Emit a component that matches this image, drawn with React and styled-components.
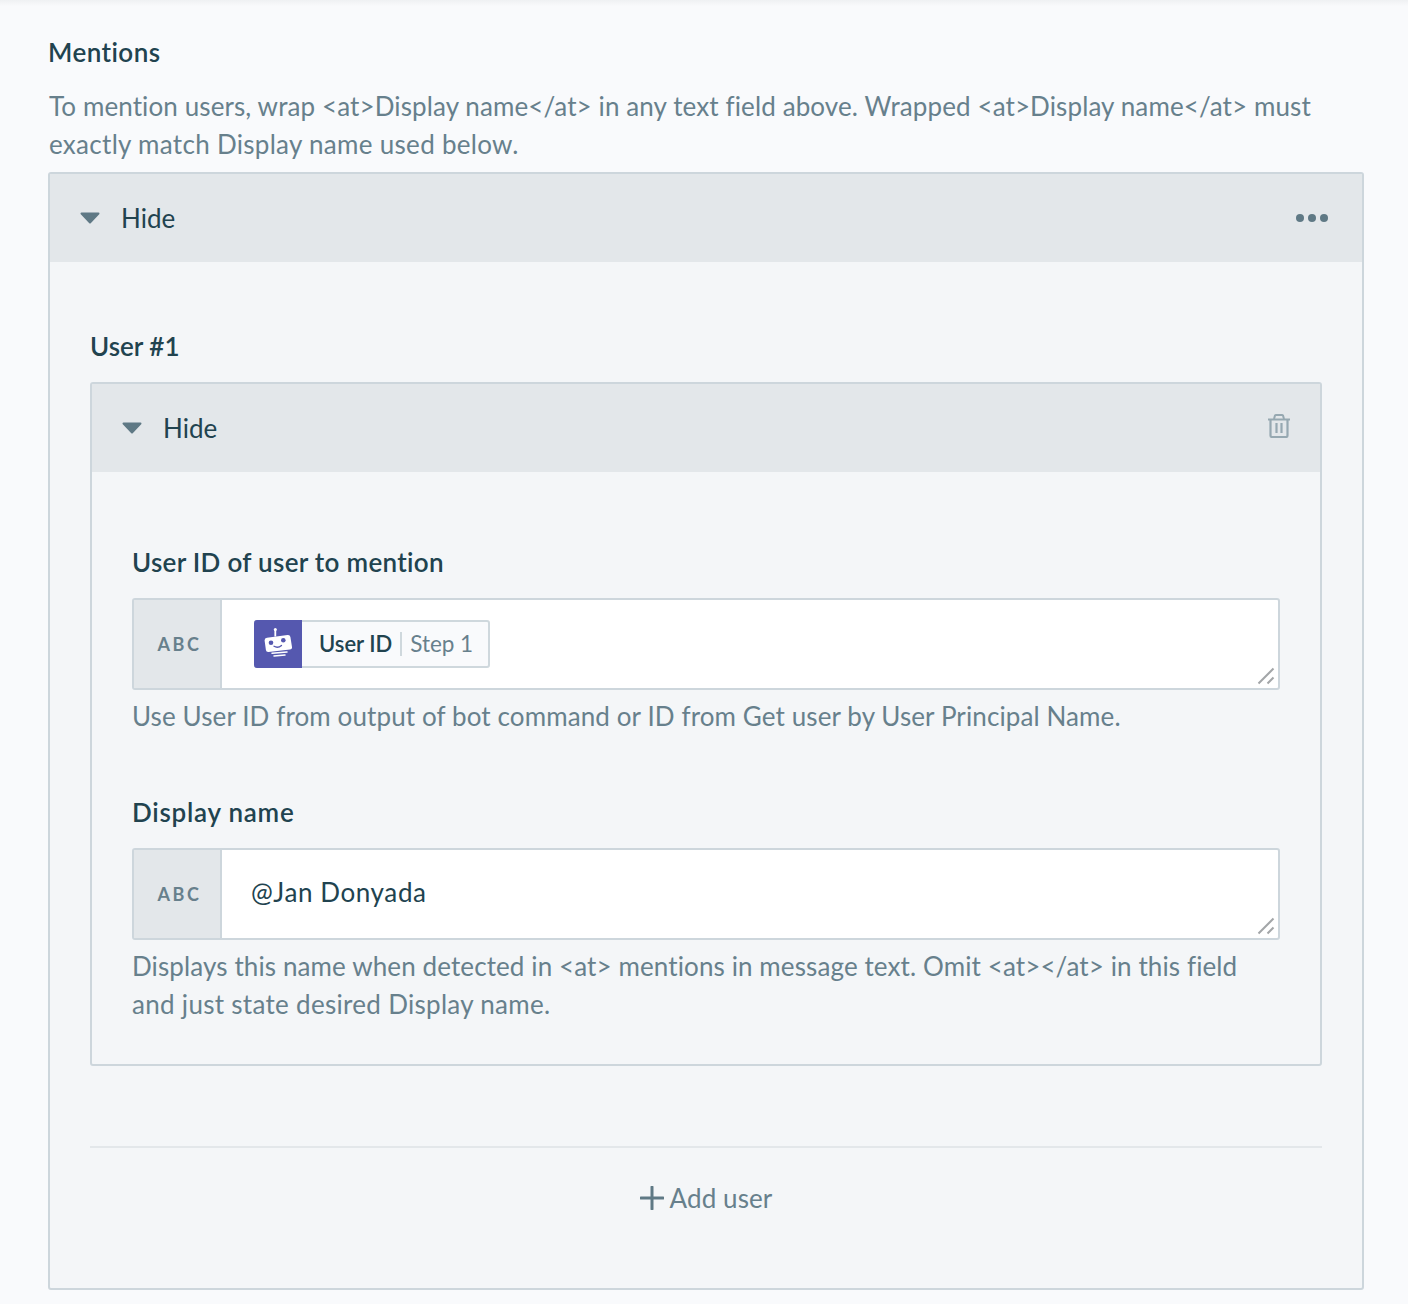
import React from "react";
import styled, { createGlobalStyle } from "styled-components";

const Global = createGlobalStyle`
  html, body { margin: 0; padding: 0; background: #f9fafc; }
  * { box-sizing: border-box; }
  body { font-family: "Lato", "Noto Sans", sans-serif; font-variant-ligatures: none; }
`;

const Page = styled.div`
  position: relative;
  width: 1408px;
  height: 1304px;
  overflow: hidden;
  padding: 34px 44px 0 48px;
  background: #f9fafc;
  &::before {
    content: "";
    position: absolute;
    left: 0; right: 0; top: 0;
    height: 6px;
    background: linear-gradient(#eff1f3, #f9fafc);
  }
`;

const Heading = styled.div`
  font-size: 26px;
  line-height: 37px;
  padding-bottom: 1px;
  font-weight: 600;
  color: #21434f;
  letter-spacing: ${(p) => p.$spacing || 0}px;
`;

const Help = styled.div`
  font-size: 26px;
  line-height: 38px;
  padding-bottom: 1px;
  color: #67808c;
  letter-spacing: 0.11px;
`;

const LooseLine = styled.span`
  letter-spacing: 0.3px;
`;

const Description = styled(Help)`
  margin-top: 15px;
  padding-left: 1px;
`;

const Panel = styled.div`
  border: 2px solid #cdd6dc;
  border-radius: 3px;
  background: #f4f6f8;
`;

const OuterPanel = styled(Panel)`
  margin-top: 8px;
`;

const InnerPanel = styled(Panel)`
  margin-top: 16px;
`;

const PanelHeader = styled.div`
  height: 88px;
  display: flex;
  align-items: center;
  padding: 0 ${(p) => p.$right}px 0 30px;
  background: #e3e7ea;
`;

const HideLabel = styled.span`
  margin-left: 21px;
  font-size: 26px;
  line-height: 26px;
  color: #21434f;
  flex: 1;
`;

const OuterBody = styled.div`
  padding: 66px 40px 71px;
`;

const InnerBody = styled.div`
  padding: 72px 40px 40px;
`;

const Label = styled(Heading)`
  margin-top: ${(p) => p.$top || 0}px;
`;

const Field = styled.div`
  display: flex;
  height: 92px;
  margin-top: 16px;
  border: 2px solid #cdd6dc;
  border-radius: 3px;
  background: #fff;
  position: relative;
`;

const TypeTag = styled.div`
  width: 88px;
  border-right: 2px solid #cdd6dc;
  background: #e3e7ea;
  display: flex;
  align-items: center;
  justify-content: center;
  padding-left: 5px;
  font-size: 18px;
  font-weight: 700;
  letter-spacing: 2.6px;
  color: #67808c;
`;

const FieldValue = styled.div`
  flex: 1;
  display: flex;
  align-items: center;
  padding-left: ${(p) => p.$pad}px;
  padding-bottom: ${(p) => p.$lift || 0}px;
  font-size: 26px;
  letter-spacing: 0.6px;
  color: #21434f;
`;

const Grip = styled.svg`
  position: absolute;
  right: 3px;
  bottom: 3px;
`;

const Chip = styled.div`
  display: flex;
  align-items: center;
  height: 48px;
  width: 236px;
  border: 2px solid #cfd8dd;
  border-radius: 3px;
  background: #f9fafc;
  white-space: nowrap;
`;

const ChipIcon = styled.div`
  width: 48px;
  height: 48px;
  margin: -2px 0 -2px -2px;
  padding-bottom: 3px;
  background: #5558af;
  border-radius: 3px 0 0 3px;
  display: flex;
  align-items: center;
  justify-content: center;
  flex: none;
`;

const ChipName = styled.span`
  margin-left: 17px;
  padding-bottom: 2px;
  font-size: 22px;
  font-weight: 600;
  letter-spacing: 0;
  color: #21434f;
`;

const ChipStep = styled.span`
  margin-left: 8px;
  padding-left: 8px;
  border-left: 2px solid #cfd8dd;
  font-size: 22.5px;
  line-height: 24px;
  letter-spacing: -0.05px;
  color: #67808c;
`;

const FieldHelp = styled(Help)`
  margin-top: 7px;
`;

const Divider = styled.div`
  height: 2px;
  margin-top: 80px;
  background: #e3e7ea;
`;

const AddRow = styled.div`
  display: flex;
  align-items: center;
  justify-content: center;
  gap: 6px;
  height: 38px;
  margin-top: 31px;
  font-size: 26px;
  letter-spacing: 0.1px;
  color: #67808c;
`;

const Caret = () => (
  <svg width="20" height="12" viewBox="0 0 20 12">
    <path d="M1.500 1.500h17L10 10.500z" fill="#5f7985" stroke="#5f7985" strokeWidth="2" strokeLinejoin="round" />
  </svg>
);

const Dots = () => (
  <svg width="34" height="10" viewBox="0 0 34 10">
    <circle cx="5" cy="5" r="4" fill="#5f7985" />
    <circle cx="17" cy="5" r="4" fill="#5f7985" />
    <circle cx="29" cy="5" r="4" fill="#5f7985" />
  </svg>
);

const TrashIcon = styled.svg`
  margin-top: -4px;
`;

const Trash = () => (
  <TrashIcon width="22" height="24" viewBox="0 0 22 24" fill="none" stroke="#96a8b1" strokeWidth="2.200">
    <path d="M0 5.500h22" strokeWidth="2" />
    <path d="M6 5 7 1.500q.3-.5 1-.5h6q.7 0 1 .5L16 5" strokeWidth="2" />
    <path d="M2.500 6v15.500q0 1.500 1.500 1.500h14q1.500 0 1.500-1.500V6" />
    <path d="M8.500 9v10M13.500 9v10" />
  </TrashIcon>
);

const Bot = () => (
  <svg width="28" height="29" viewBox="0 0 28 29">
    <circle cx="11.300" cy="1.500" r="1.500" fill="#fff" />
    <rect x="10.400" y="1.500" width="1.800" height="7" fill="#fff" />
    <path d="M3 9.700 23.500 7q2.500-.3 2.900 2L28 19q.3 2.200-2 2.600L4.500 24q-2.300.2-2.600-2L.6 12.500q-.2-2.400 2.400-2.800z" fill="#fff" />
    <circle cx="7" cy="14.700" r="2.300" fill="#5558af" />
    <circle cx="19.300" cy="12.300" r="2.300" fill="#5558af" />
    <path d="M10 18.300q4 2.200 7.500-.9" fill="none" stroke="#5558af" strokeWidth="1.300" strokeLinecap="round" />
    <path d="M8 25.200 23 24M10 28 21 27" stroke="#fff" strokeWidth="1.500" strokeLinecap="round" />
  </svg>
);

const ResizeGrip = () => (
  <Grip width="18" height="18" viewBox="0 0 18 18">
    <path d="M1.500 16.500 16.500 1.500M10.500 16.500 16.500 10.500" stroke="#a3a6a8" strokeWidth="2" />
  </Grip>
);

const Plus = () => (
  <svg width="24" height="24" viewBox="0 0 24 24">
    <path d="M12 1v22M1 12h22" stroke="#5f7985" strokeWidth="3" strokeLinecap="round" />
  </svg>
);

export default function App() {
  return (
    <Page>
      <Global />
      <Heading $spacing={0.45}>Mentions</Heading>
      <Description>
        To mention users, wrap &lt;at&gt;Display name&lt;/at&gt; in any text field above. Wrapped &lt;at&gt;Display name&lt;/at&gt; must
        <br />
        <LooseLine>exactly match Display name used below.</LooseLine>
      </Description>
      <OuterPanel>
        <PanelHeader $right={33}>
          <Caret />
          <HideLabel>Hide</HideLabel>
          <Dots />
        </PanelHeader>
        <OuterBody>
          <Heading>User #1</Heading>
          <InnerPanel>
            <PanelHeader $right={30}>
              <Caret />
              <HideLabel>Hide</HideLabel>
              <Trash />
            </PanelHeader>
            <InnerBody>
              <Label $spacing={0.3}>User ID of user to mention</Label>
              <Field>
                <TypeTag>ABC</TypeTag>
                <FieldValue $pad={32}>
                  <Chip>
                    <ChipIcon>
                      <Bot />
                    </ChipIcon>
                    <ChipName>User ID</ChipName>
                    <ChipStep>Step 1</ChipStep>
                  </Chip>
                </FieldValue>
                <ResizeGrip />
              </Field>
              <FieldHelp>Use User ID from output of bot command or ID from Get user by User Principal Name.</FieldHelp>
              <Label $top={58} $spacing={0.75}>Display name</Label>
              <Field>
                <TypeTag>ABC</TypeTag>
                <FieldValue $pad={29} $lift={5}>@Jan Donyada</FieldValue>
                <ResizeGrip />
              </Field>
              <FieldHelp>
                Displays this name when detected in &lt;at&gt; mentions in message text. Omit &lt;at&gt;&lt;/at&gt; in this field
                <br />
                <LooseLine>and just state desired Display name.</LooseLine>
              </FieldHelp>
            </InnerBody>
          </InnerPanel>
          <Divider />
          <AddRow>
            <Plus />
            Add user
          </AddRow>
        </OuterBody>
      </OuterPanel>
    </Page>
  );
}
